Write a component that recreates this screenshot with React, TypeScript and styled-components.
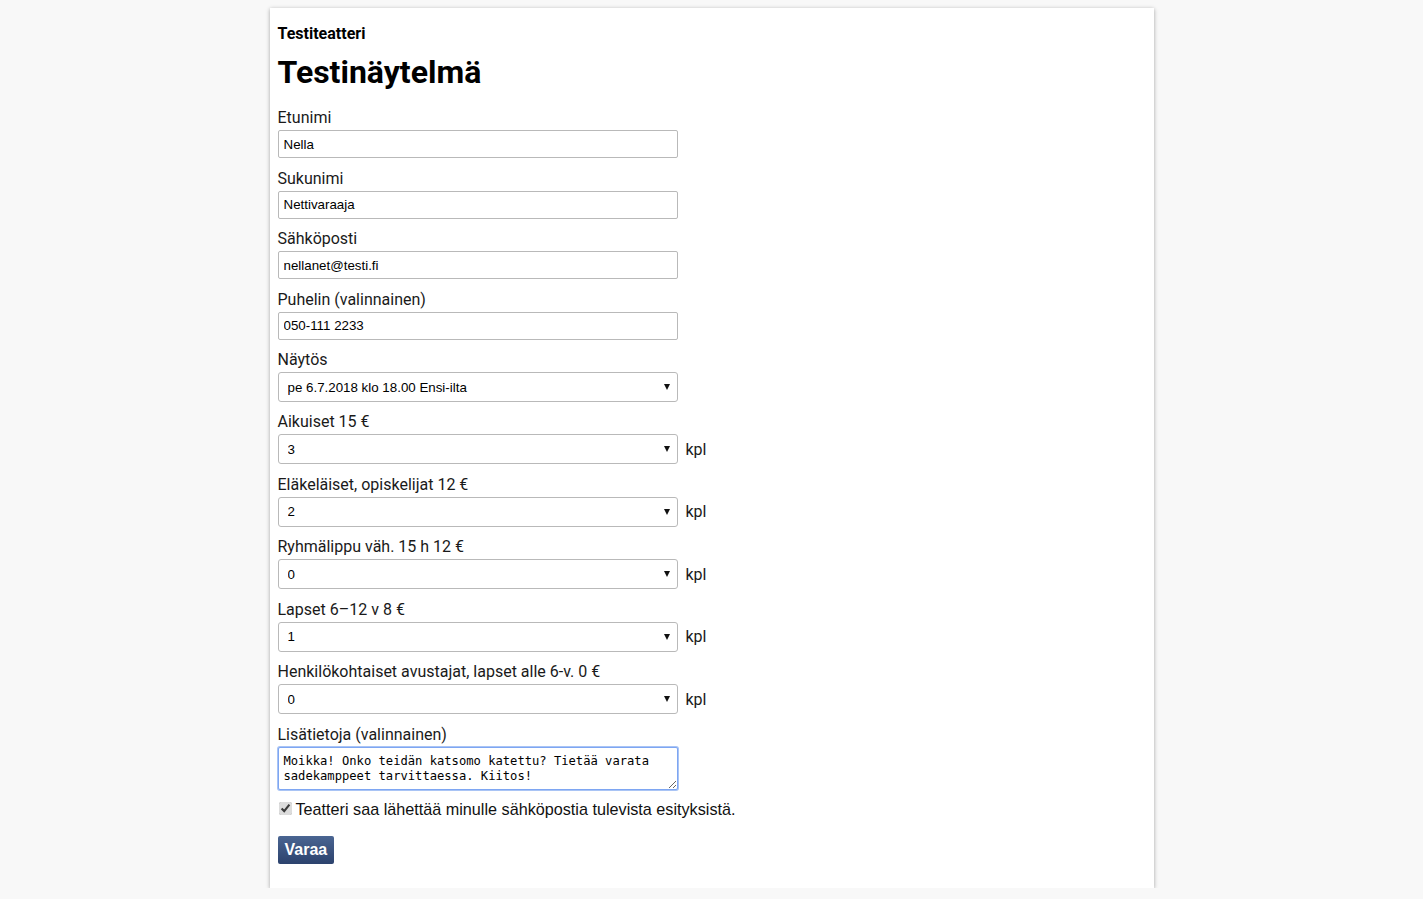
import React from "react";
import styled, { createGlobalStyle } from "styled-components";

const Global = createGlobalStyle`
  html, body { margin: 0; padding: 0; background: #f8f8f8; }
  body { font-family: Roboto, "Liberation Sans", sans-serif; color: #111; }
`;

const Card = styled.main`
  width: 868px;
  margin: 8px auto 0;
  background: #fff;
  box-shadow: 0 1px 4px rgba(0, 0, 0, 0.35);
  padding: 16px 8px 24px;
  box-sizing: content-box;
`;

const Theatre = styled.div`
  font-family: Roboto, sans-serif;
  font-weight: 700;
  font-size: 16px;
  line-height: 19px;
  color: #000;
`;

const Title = styled.h1`
  font-family: Roboto, sans-serif;
  font-weight: 700;
  font-size: 32px;
  line-height: 38px;
  margin: 10px 0 17px;
  color: #000;
`;

const Group = styled.div<{ $gap: number }>`
  display: flex;
  flex-direction: column;
  margin-bottom: ${(p) => p.$gap}px;
`;

const Label = styled.label`
  font-family: Roboto, sans-serif;
  font-size: 16px;
  line-height: 20px;
  color: #1a1a1a;
  margin-bottom: 2px;
`;

const TextInput = styled.input`
  box-sizing: border-box;
  width: 400px;
  height: 28px;
  border: 1px solid #b9b9b9;
  border-radius: 2px;
  padding: 0 5px;
  font-family: "Liberation Sans", Arial, sans-serif;
  font-size: 13.33px;
  color: #000;
  background: #fff;
  outline: none;
`;

const Row = styled.div`
  display: flex;
  align-items: center;
  gap: 8px;
`;

const SelectWrap = styled.div`
  position: relative;
  width: 400px;
  height: 30px;
  &::after {
    content: "";
    position: absolute;
    right: 8px;
    top: 12px;
    border-left: 3.5px solid transparent;
    border-right: 3.5px solid transparent;
    border-top: 6px solid #111;
    pointer-events: none;
  }
`;

const Select = styled.select`
  appearance: none;
  box-sizing: border-box;
  width: 100%;
  height: 100%;
  border: 1px solid #b9b9b9;
  border-radius: 3px;
  padding: 0 20px 0 9px;
  font-family: "Liberation Sans", Arial, sans-serif;
  font-size: 13.33px;
  color: #000;
  background: #fff;
  outline: none;
`;

const Unit = styled.span`
  font-family: Roboto, sans-serif;
  font-size: 16px;
  color: #1a1a1a;
`;

const TextArea = styled.textarea`
  box-sizing: border-box;
  width: 400px;
  height: 43px;
  border: 1px solid #7ea6f2;
  box-shadow: 0 0 0 1px #a9c4f5;
  border-radius: 2px;
  padding: 6px 5px 2px;
  font-family: "DejaVu Sans Mono", "Liberation Mono", monospace;
  font-size: 12.15px;
  line-height: 15px;
  color: #000;
  outline: none;
  resize: vertical;
`;

const CheckRow = styled.label`
  display: flex;
  align-items: center;
  gap: 4px;
  margin: 9px 0 17px;
  font-family: "Liberation Sans", Arial, sans-serif;
  font-size: 16.2px;
  line-height: 20px;
  color: #111;
`;

const Check = styled.input`
  width: 13px;
  height: 13px;
  margin: 0 0 0 1px;
  accent-color: #dcdcdc;
`;

const Button = styled.button`
  display: block;
  height: 28px;
  padding: 0 7px;
  border: none;
  border-radius: 2px;
  background: linear-gradient(#4a6592, #2c426d);
  color: #fff;
  font-family: "Liberation Sans", Arial, sans-serif;
  font-weight: 700;
  font-size: 16px;
  cursor: pointer;
`;

const textFields = [
  { label: "Etunimi", value: "Nella" },
  { label: "Sukunimi", value: "Nettivaraaja" },
  { label: "Sähköposti", value: "nellanet@testi.fi" },
  { label: "Puhelin (valinnainen)", value: "050-111 2233" },
];

const tickets = [
  { label: "Aikuiset 15 €", value: "3" },
  { label: "Eläkeläiset, opiskelijat 12 €", value: "2" },
  { label: "Ryhmälippu väh. 15 h 12 €", value: "0" },
  { label: "Lapset 6–12 v 8 €", value: "1" },
  { label: "Henkilökohtaiset avustajat, lapset alle 6-v. 0 €", value: "0" },
];

const counts = Array.from({ length: 11 }, (_, i) => String(i));

export default function App() {
  return (
    <>
      <Global />
      <Card>
        <Theatre>Testiteatteri</Theatre>
        <Title>Testinäytelmä</Title>
        {textFields.map((f) => (
          <Group key={f.label} $gap={10.5}>
            <Label>{f.label}</Label>
            <TextInput defaultValue={f.value} />
          </Group>
        ))}
        <Group $gap={10.45}>
          <Label>Näytös</Label>
          <SelectWrap>
            <Select defaultValue="a">
              <option value="a">pe 6.7.2018 klo 18.00 Ensi-ilta</option>
            </Select>
          </SelectWrap>
        </Group>
        {tickets.map((t) => (
          <Group key={t.label} $gap={10.45}>
            <Label>{t.label}</Label>
            <Row>
              <SelectWrap>
                <Select defaultValue={t.value}>
                  {counts.map((c) => (
                    <option key={c} value={c}>
                      {c}
                    </option>
                  ))}
                </Select>
              </SelectWrap>
              <Unit>kpl</Unit>
            </Row>
          </Group>
        ))}
        <Group $gap={0}>
          <Label>Lisätietoja (valinnainen)</Label>
          <TextArea defaultValue="Moikka! Onko teidän katsomo katettu? Tietää varata sadekamppeet tarvittaessa. Kiitos!" />
        </Group>
        <CheckRow>
          <Check type="checkbox" defaultChecked />
          Teatteri saa lähettää minulle sähköpostia tulevista esityksistä.
        </CheckRow>
        <Button>Varaa</Button>
      </Card>
    </>
  );
}
